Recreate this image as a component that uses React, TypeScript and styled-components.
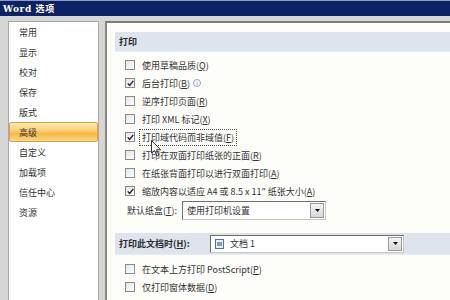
import React from 'react';
import styled, { createGlobalStyle } from 'styled-components';

const GlobalStyle = createGlobalStyle`
  html, body {
    margin: 0;
    padding: 0;
    background: #d4d4d4;
  }
  body {
    font-family: 'Liberation Sans', 'Noto Sans CJK SC', sans-serif;
    font-size: 9px;
    color: #2b2b2b;
  }
`;

const Window = styled.div`
  width: 450px;
  height: 300px;
  overflow: hidden;
  display: flex;
  flex-direction: column;
  background: #d6d6d4;
`;

const TitleBar = styled.div`
  height: 15px;
  flex-shrink: 0;
  display: flex;
  align-items: center;
  padding-left: 3px;
  background: #0c2264;
  border-top: 1px solid #8c9cc4;
  color: #ffffff;
  font-family: 'DejaVu Serif', 'Noto Sans CJK SC', serif;
  font-weight: bold;
  font-size: 9px;
  letter-spacing: 0.6px;
`;

const Body = styled.div`
  flex: 1;
  display: flex;
  padding-top: 5px;
  min-height: 0;
`;

const Nav = styled.div`
  width: 89px;
  margin-left: 8px;
  flex-shrink: 0;
  background: #ffffff;
  border: 1px solid #a8a8a8;
  border-bottom: none;
  display: flex;
  flex-direction: column;
`;

const NavItem = styled.div<{ $active?: boolean }>`
  box-sizing: border-box;
  height: 20px;
  flex-shrink: 0;
  display: flex;
  align-items: center;
  padding-left: 9px;
  font-family: 'Noto Sans CJK SC', sans-serif;
  font-size: 9px;
  color: #333;
  border-radius: 2px;
  border: 1px solid ${p => (p.$active ? '#d5a24a' : 'transparent')};
  background: ${p =>
    p.$active
      ? 'linear-gradient(to bottom, #fde8b0 0%, #fcd27a 40%, #f9b842 60%, #fcd98c 100%)'
      : 'transparent'};
`;

const Content = styled.div`
  flex: 1;
  margin-left: 6px;
  background: #fdfdfa;
  border-top: 2px solid #7c7c7c;
  border-left: 2px solid #858585;
  padding: 9px 0 0 8px;
  display: flex;
  flex-direction: column;
  min-width: 0;
`;

const SectionHeader = styled.div<{ $tall?: boolean }>`
  height: ${p => (p.$tall ? 21 : 19)}px;
  flex-shrink: 0;
  display: flex;
  align-items: center;
  padding-left: 4px;
  background: #dde4ed;
  border-bottom: 1px solid #e8edf3;
  font-family: 'Noto Sans CJK SC', sans-serif;
  font-weight: bold;
  font-size: 9px;
  color: #2a2a2a;
`;

const HeaderLabel = styled.span`
  width: 91px;
  flex-shrink: 0;
`;

const Rows = styled.div<{ $gap: number }>`
  margin-top: ${p => p.$gap}px;
  display: flex;
  flex-direction: column;
`;

const Row = styled.div`
  position: relative;
  height: 18px;
  display: flex;
  align-items: center;
  gap: 6px;
  padding-left: 10px;
  white-space: nowrap;
  font-family: 'Noto Sans CJK SC', sans-serif;
  font-size: 9px;
  color: #333;
`;

const Box = styled.span`
  width: 8px;
  height: 8px;
  flex-shrink: 0;
  border: 1px solid #8a8a8a;
  background: linear-gradient(to bottom right, #e4e4e4, #ffffff);
  display: flex;
  align-items: center;
  justify-content: center;
`;

const Label = styled.span<{ $focused?: boolean }>`
  padding: 1px 2px;
  margin-left: -2px;
  border: 1px dotted ${p => (p.$focused ? '#555' : 'transparent')};
`;

const Info = styled.span`
  display: inline-flex;
  align-items: center;
  justify-content: center;
  width: 6px;
  height: 6px;
  margin-left: 3px;
  border: 1px solid #8fa3c4;
  border-radius: 50%;
  font-size: 5px;
  color: #6a82b0;
  vertical-align: 2px;
  font-family: 'DejaVu Serif', serif;
`;

const TrayRow = styled.div`
  height: 20px;
  display: flex;
  align-items: center;
  padding-left: 12px;
  font-family: 'Noto Sans CJK SC', sans-serif;
  font-size: 9px;
  color: #333;
`;

const TrayLabel = styled.span`
  width: 55px;
  flex-shrink: 0;
`;

const Combo = styled.div<{ $width: number; $height: number }>`
  width: ${p => p.$width}px;
  height: ${p => p.$height}px;
  box-sizing: border-box;
  display: flex;
  align-items: center;
  background: #ffffff;
  border-top: 1px solid #6f6f6f;
  border-left: 1px solid #6f6f6f;
  border-right: 1px solid #c8c8c8;
  border-bottom: 1px solid #c8c8c8;
  font-family: 'Noto Sans CJK SC', sans-serif;
  font-weight: normal;
  font-size: 9px;
  color: #333;
`;

const ComboText = styled.span`
  flex: 1;
  display: flex;
  align-items: center;
  gap: 6px;
  padding-left: 4px;
`;

const DropButton = styled.span`
  width: 12px;
  align-self: stretch;
  margin: 1px;
  display: flex;
  align-items: center;
  justify-content: center;
  background: linear-gradient(to bottom, #f4f4f4, #d8d8d8);
  border: 1px solid #9a9a9a;
`;

const Cursor = styled.svg`
  position: absolute;
  left: 36px;
  top: 12px;
`;

const Check = () => (
  <svg width="7" height="7" viewBox="0 0 7 7">
    <path d="M0.8 3.4 L2.6 5.4 L6.3 0.9" fill="none" stroke="#222" strokeWidth="1.4" />
  </svg>
);

const Arrow = () => (
  <svg width="5" height="3" viewBox="0 0 5 3">
    <path d="M0 0 H5 L2.5 3 Z" fill="#111" />
  </svg>
);

const DocIcon = () => (
  <svg width="9" height="10" viewBox="0 0 9 10">
    <rect x="0.5" y="0.5" width="8" height="9" fill="#e8eef8" stroke="#4d6fa6" />
    <rect x="2" y="3" width="5" height="4" fill="#7f9cc8" />
  </svg>
);

const Key = ({ k }: { k: string }) => (
  <>
    (<u>{k}</u>)
  </>
);

interface Option {
  text: React.ReactNode;
  checked?: boolean;
  focused?: boolean;
  info?: boolean;
  cursor?: boolean;
}

const printOptions: Option[] = [
  { text: <>使用草稿品质<Key k="Q" /></> },
  { text: <>后台打印<Key k="B" /></>, checked: true, info: true },
  { text: <>逆序打印页面<Key k="R" /></> },
  { text: <>打印 XML 标记<Key k="X" /></> },
  { text: <>打印域代码而非域值<Key k="F" /></>, checked: true, focused: true, cursor: true },
  { text: <>打印在双面打印纸张的正面<Key k="R" /></> },
  { text: <>在纸张背面打印以进行双面打印<Key k="A" /></> },
  { text: <>缩放内容以适应 A4 或 8.5 x 11" 纸张大小<Key k="A" /></>, checked: true },
];

const docOptions: Option[] = [
  { text: <>在文本上方打印 PostScript<Key k="P" /></> },
  { text: <>仅打印窗体数据<Key k="D" /></> },
];

const navItems = ['常用', '显示', '校对', '保存', '版式', '高级', '自定义', '加载项', '信任中心', '资源'];

const OptionRow = ({ opt }: { opt: Option }) => (
  <Row>
    <Box>{opt.checked && <Check />}</Box>
    <Label $focused={opt.focused}>
      {opt.text}
      {opt.info && <Info>i</Info>}
    </Label>
    {opt.cursor && (
      <Cursor width="11" height="17" viewBox="0 0 11 17">
        <path d="M0.5 0.5 L0.5 13 L3.5 10.5 L6 16 L8 15 L5.5 9.8 L9.8 9.8 Z" fill="#fff" stroke="#333" strokeWidth="1" />
      </Cursor>
    )}
  </Row>
);

const App: React.FC = () => {
  return (
    <Window>
      <GlobalStyle />
      <TitleBar>Word 选项</TitleBar>
      <Body>
        <Nav>
          {navItems.map(item => (
            <NavItem key={item} $active={item === '高级'}>
              {item}
            </NavItem>
          ))}
        </Nav>
        <Content>
          <SectionHeader>打印</SectionHeader>
          <Rows $gap={4}>
            {printOptions.map((opt, i) => (
              <OptionRow key={i} opt={opt} />
            ))}
            <TrayRow>
              <TrayLabel>
                默认纸盒(<u>T</u>):
              </TrayLabel>
              <Combo $width={144} $height={19}>
                <ComboText>使用打印机设置</ComboText>
                <DropButton>
                  <Arrow />
                </DropButton>
              </Combo>
            </TrayRow>
          </Rows>
          <Rows $gap={13}>
            <SectionHeader $tall>
              <HeaderLabel>
                打印此文档时(<u>H</u>):
              </HeaderLabel>
              <Combo $width={194} $height={18}>
                <ComboText>
                  <DocIcon />
                  文档 1
                </ComboText>
                <DropButton>
                  <Arrow />
                </DropButton>
              </Combo>
            </SectionHeader>
          </Rows>
          <Rows $gap={5}>
            {docOptions.map((opt, i) => (
              <OptionRow key={i} opt={opt} />
            ))}
          </Rows>
        </Content>
      </Body>
    </Window>
  );
};

export default App;
